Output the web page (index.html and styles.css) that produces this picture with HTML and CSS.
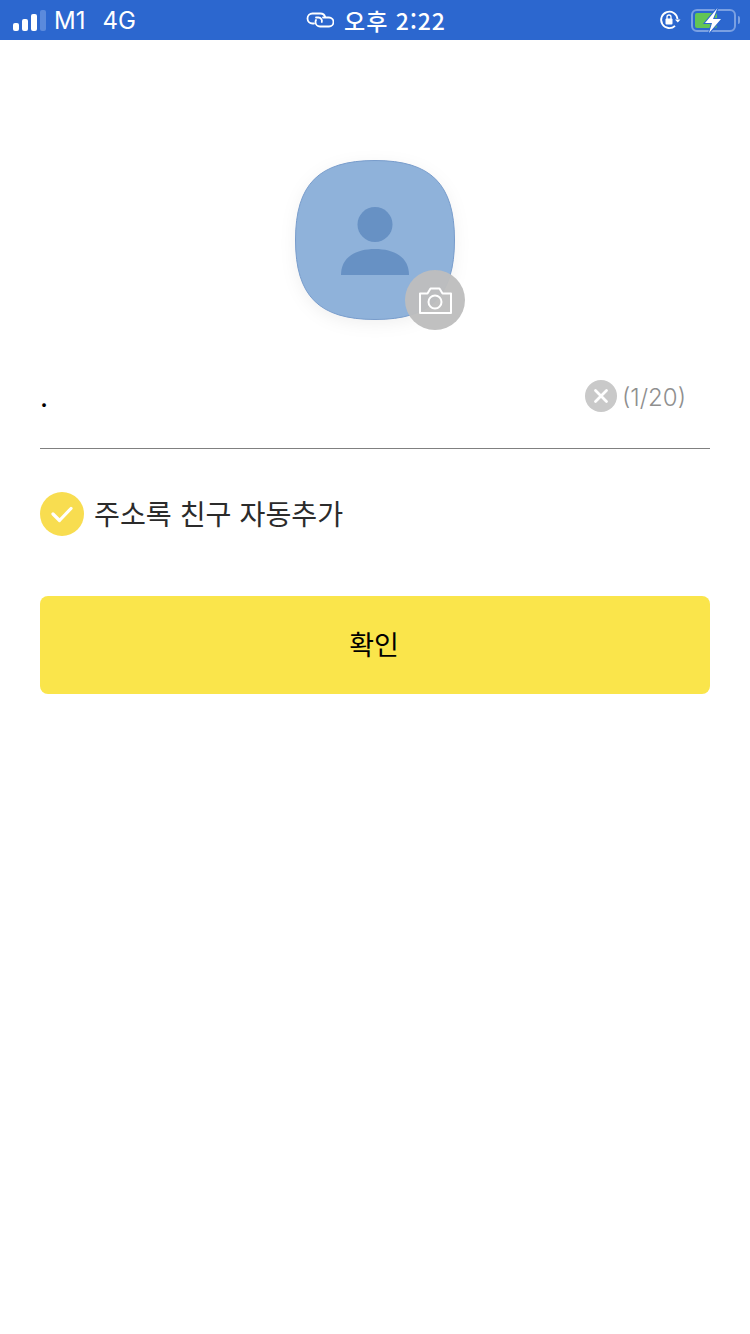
FILE: index.html
```html
<!DOCTYPE html>
<html lang="ko">
<head>
  <meta charset="UTF-8">
  <meta name="viewport" content="width=device-width, initial-scale=1">
  <title>프로필 설정</title>
  <link rel="stylesheet" href="styles.css">
</head>
<body>

<header class="status-bar">
  <div class="status-left">
    <span class="signal">
      <i class="s1"></i><i class="s2"></i><i class="s3"></i><i class="s4"></i>
    </span>
    <span class="carrier">M1</span>
    <span class="network">4G</span>
  </div>
  <div class="status-center">
    <svg class="link-icon" width="28" height="18" viewBox="0 0 28 18" fill="none" stroke="#fff" stroke-width="1.8" stroke-linecap="round">
      <path d="M8 12.500H6.500a5 5 0 0 1 0-10h8a5 5 0 0 1 4.700 3.500"/>
      <path d="M10 6.500h2.500a3.500 3.500 0 0 1 3.300 4.500"/>
      <path d="M17 6.500h6a4.500 4.500 0 0 1 0 9h-9a4.500 4.500 0 0 1-4.500-4.500 4.500 4.500 0 0 1 .5-2"/>
    </svg>
    <span class="clock">오후 2:22</span>
  </div>
  <div class="status-right">
    <svg class="lock-icon" width="22" height="22" viewBox="0 0 22 22" fill="none">
      <path d="M18.500 10a8.200 8.200 0 1 0-2.500 6.800" stroke="#fff" stroke-width="1.800"/>
      <path d="M16 10.500h5.500l-2.700 3z" fill="#fff"/>
      <rect x="6.500" y="9.500" width="7" height="6" rx="1" fill="#fff"/>
      <path d="M8 10V8a2 2 0 0 1 4 0v2" stroke="#fff" stroke-width="1.300"/>
    </svg>
    <span class="battery">
      <span class="battery-fill"></span>
      <svg class="bolt" width="18" height="26" viewBox="0 0 18 26">
        <path d="M12.500 1 0 16H7L4 26 16 12H8z" fill="#fff" stroke="#2c67cf" stroke-width="2" paint-order="stroke"/>
      </svg>
    </span>
    <span class="battery-cap"></span>
  </div>
</header>

<main class="content">
  <div class="avatar">
    <svg class="avatar-shape" width="160" height="160" viewBox="0 0 160 160">
      <path d="M80 .5C136 .5 159.500 24 159.500 80S136 159.500 80 159.500.5 136 .5 80 24 .5 80 .5z" fill="#8fb2da" stroke="#789ccb" stroke-width="1"/>
      <circle cx="80" cy="64.500" r="17.500" fill="#6791c4"/>
      <path d="M46 115c0-18 15-26 34-26s34 8 34 26z" fill="#6791c4"/>
    </svg>
    <span class="camera-btn">
      <svg width="34" height="30" viewBox="0 0 34 30" fill="none" stroke="#fff" stroke-width="2">
        <path d="M2 8.500h7.500l3-5h9l3 5H33v19.500H2z" stroke-linejoin="round"/>
        <circle cx="17" cy="17" r="6.500"/>
      </svg>
    </span>
  </div>

  <div class="name-field">
    <span class="name-value">.</span>
    <div class="name-tools">
      <span class="clear-btn">
        <svg width="16" height="16" viewBox="0 0 16 16" stroke="#fff" stroke-width="2.800" stroke-linecap="round">
          <path d="M2.500 2.500l11 11M13.500 2.500l-11 11"/>
        </svg>
      </span>
      <span class="count">(1/20)</span>
    </div>
  </div>

  <label class="auto-add">
    <span class="check">
      <svg width="26" height="20" viewBox="0 0 26 20" fill="none" stroke="#fff" stroke-width="3.200" stroke-linecap="round" stroke-linejoin="round">
        <path d="M4 10l6.500 6.500L22 4.500"/>
      </svg>
    </span>
    <span class="auto-add-text">주소록 친구 자동추가</span>
  </label>

  <button class="confirm-btn" type="button">확인</button>
</main>

</body>
</html>
```

FILE: styles.css
```css
* {
  box-sizing: border-box;
}
body {
  margin: 0;
  width: 750px;
  height: 1334px;
  background-color: #fff;
  font-family: 'Noto Sans CJK KR', 'Inter', sans-serif;
  overflow: hidden;
}

/* status bar */
.status-bar {
  height: 40px;
  background-color: #2c67cf;
  color: #fff;
  display: grid;
  grid-template-columns: 1fr auto 1fr;
  align-items: center;
  padding: 0 10px 0 13px;
}
.status-left {
  display: flex;
  align-items: center;
  font-family: 'Inter', 'Liberation Sans', sans-serif;
  font-size: 24px;
}
.signal {
  display: flex;
  align-items: flex-end;
  gap: 3px;
  height: 21px;
  margin-right: 8px;
}
.signal i {
  display: block;
  width: 6px;
  border-radius: 2px;
  background-color: #fff;
}
.signal .s1 { height: 8px; }
.signal .s2 { height: 12px; }
.signal .s3 { height: 17px; }
.signal .s4 { height: 21px; background-color: #5b8adc; }
.network {
  margin-left: 17px;
}
.status-center {
  display: flex;
  align-items: center;
  gap: 10px;
  margin-left: -1px;
}
.clock {
  font-size: 23px;
  font-weight: 500;
  letter-spacing: 1px;
  line-height: 40px;
}
.status-right {
  display: flex;
  align-items: center;
  justify-content: flex-end;
}
.lock-icon {
  margin-right: 10px;
}
.battery {
  position: relative;
  width: 45px;
  height: 23px;
  border: 2px solid #7aa0e2;
  border-radius: 6px;
  padding: 2px;
}
.battery-fill {
  display: block;
  width: 22px;
  height: 15px;
  border-radius: 2px;
  background-color: #62c554;
}
.bolt {
  position: absolute;
  left: 12px;
  top: -4px;
  overflow: visible;
}
.battery-cap {
  width: 2px;
  height: 8px;
  margin-left: 2px;
  border-radius: 0 2px 2px 0;
  background-color: #7aa0e2;
}

/* form */
.content {
  padding: 120px 40px 0;
}
.avatar {
  position: relative;
  width: 160px;
  height: 160px;
  margin: 0 auto;
}
.avatar-shape {
  display: block;
  filter: drop-shadow(0 4px 8px rgba(0,0,0,0.06));
}
.camera-btn {
  position: absolute;
  left: 110px;
  top: 110px;
  width: 60px;
  height: 60px;
  border-radius: 50%;
  background-color: rgba(189,189,189,0.96);
  display: flex;
  align-items: center;
  justify-content: center;
}
.name-field {
  display: flex;
  justify-content: space-between;
  height: 69px;
  margin-top: 60px;
  padding-right: 24px;
  border-bottom: 1px solid #808080;
}
.name-value {
  font-family: 'Inter', 'Liberation Sans', sans-serif;
  font-size: 28px;
  line-height: 34px;
  color: #000;
}
.name-tools {
  display: flex;
  align-items: flex-start;
  gap: 5px;
}
.clear-btn {
  width: 32px;
  height: 32px;
  border-radius: 50%;
  background-color: #c9c9c9;
  display: flex;
  align-items: center;
  justify-content: center;
}
.count {
  font-family: 'Inter', 'Liberation Sans', sans-serif;
  font-size: 24px;
  font-weight: 300;
  line-height: 35px;
  color: #8f8f8f;
}
.auto-add {
  display: flex;
  align-items: center;
  gap: 10px;
  margin-top: 43px;
}
.check {
  width: 44px;
  height: 44px;
  border-radius: 50%;
  background-color: #f8dd50;
  display: flex;
  align-items: center;
  justify-content: center;
}
.auto-add-text {
  font-size: 28.2px;
  line-height: 42px;
  margin-bottom: 2px;
  color: #2b2b2b;
}
.confirm-btn {
  display: block;
  width: 100%;
  height: 98px;
  margin-top: 60px;
  padding: 0 2px 4px 0;
  border: none;
  border-radius: 8px;
  background-color: #fae54b;
  color: #000;
  font-family: inherit;
  font-size: 27px;
}
```
